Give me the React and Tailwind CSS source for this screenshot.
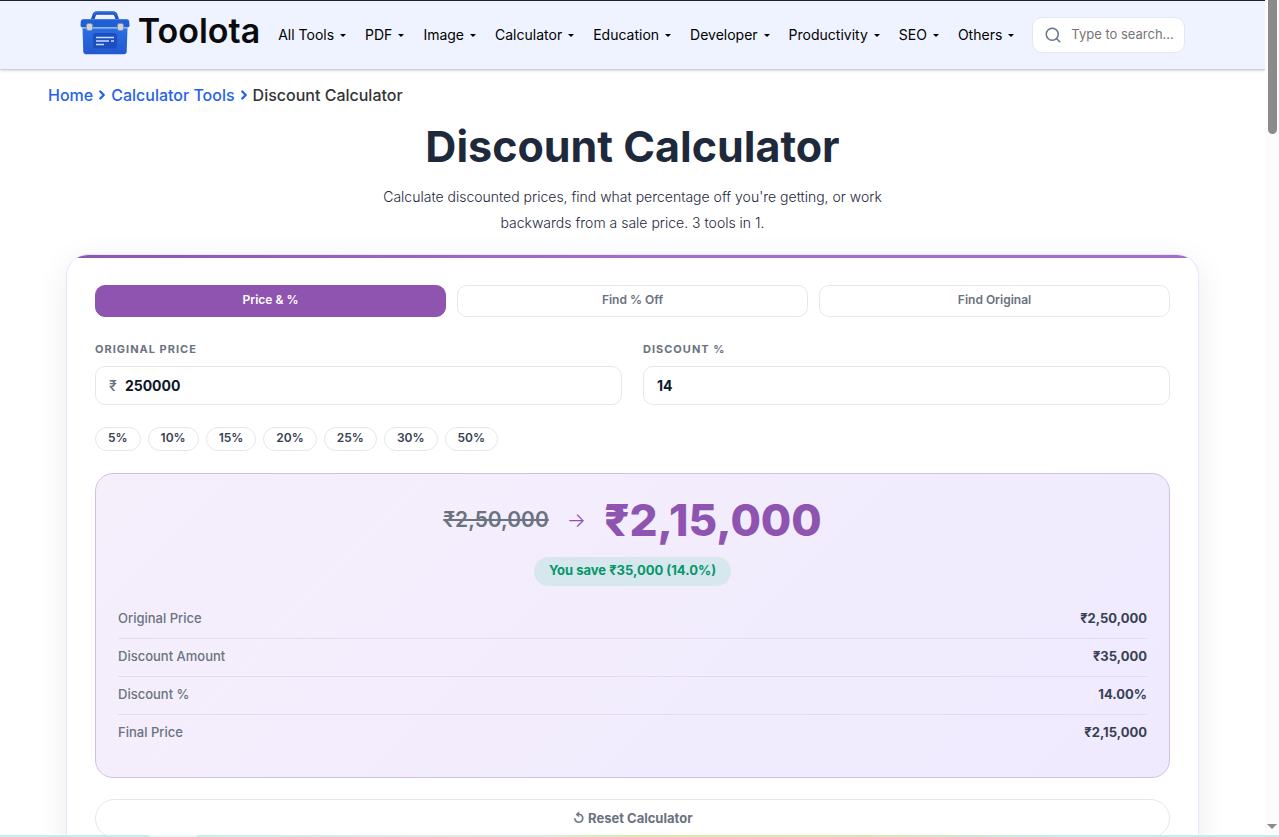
import { useState } from "react";
import { ChevronRight, Search } from "lucide-react";

const MENUS = ["All Tools", "PDF", "Image", "Calculator", "Education", "Developer", "Productivity", "SEO", "Others"];
const MODES = ["Price & %", "Find % Off", "Find Original"];
const PRESETS = [5, 10, 15, 20, 25, 30, 50];

const rupees = (n) => "₹" + Math.round(n).toLocaleString("en-IN");

function LogoMark() {
  return (
    <svg viewBox="0 0 50 44" className="h-11 w-[50px] shrink-0" aria-hidden="true">
      <defs>
        <linearGradient id="case" x1="0" y1="0" x2="0" y2="1">
          <stop offset="0" stopColor="#2b6fe4" />
          <stop offset="1" stopColor="#2258cf" />
        </linearGradient>
      </defs>
      <path d="M12.500 9l1.500-4.500Q14.700 2 17 2h16q2.300 0 3 2.500L37.500 9" fill="none" stroke="#1d55c4" strokeWidth="3.500" strokeLinejoin="round" />
      <path d="M14 4Q14.800 1.200 17 1.200h16q2.200 0 3 2.800" fill="none" stroke="#4a86ea" strokeWidth=".8" />
      <path d="M2.500 17h45l-.8 23.500q-.2 2.700-2.700 2.700H6q-2.500 0-2.700-2.700z" fill="url(#case)" />
      <path d="M.8 10.500Q1 8 3.500 8h43q2.500 0 2.700 2.500l.3 4q0 2-2 2h-45q-2 0-2-2z" fill="#1f5fd6" />
      <path d="M3 8.600h44" stroke="#4a86ea" strokeWidth=".9" />
      <path d="M2 17h46" stroke="#a9c4f5" strokeWidth="1.200" />
      <rect x="6.500" y="12.500" width="6" height="7" rx="1.800" fill="#d0d4da" stroke="#7c8aa3" strokeWidth=".8" />
      <rect x="37.500" y="12.500" width="6" height="7" rx="1.800" fill="#d0d4da" stroke="#7c8aa3" strokeWidth=".8" />
      <rect x="13" y="22" width="24" height="15.500" rx="3" fill="#1b4fc0" />
      <path d="M16 26.500h18M16 30h13M31 30h3M16 33.500h8" stroke="#c9dcff" strokeWidth="1.500" />
    </svg>
  );
}

function Header() {
  return (
    <header className="relative z-10 border-t border-t-[#1e2029] border-b border-b-[#c9ced8] bg-[#eff3ff] shadow-sm">
      <div className="flex h-[68px] items-center justify-center gap-[18px]">
        <a href="#" className="flex items-center gap-2 pb-1" aria-label="Toolota home">
          <LogoMark />
          <span className="pb-1 text-[34px] leading-10 font-semibold text-[#0b0b0d]">Toolota</span>
        </a>
        <nav className="flex items-center gap-[19px]">
          {MENUS.map((m) => (
            <button key={m} type="button" className="flex items-center gap-1.5 text-[14px] leading-5 whitespace-nowrap text-black">
              {m}
              <span className="border-x-[3px] border-t-[3px] border-x-transparent border-t-black" />
            </button>
          ))}
        </nav>
        <label className="flex h-9 w-[153px] items-center gap-[9px] rounded-[10px] border border-[#e2e8f0] bg-white pl-[11px]">
          <Search className="size-[18px] shrink-0 text-[#64748b]" />
          <input
            type="text"
            aria-label="Search tools"
            placeholder="Type to search..."
            className="w-full min-w-0 bg-transparent text-[13px] outline-none placeholder:text-[#757575]"
          />
        </label>
      </div>
    </header>
  );
}

function Breadcrumb() {
  return (
    <nav aria-label="Breadcrumb" className="flex items-center gap-0.5 px-12 pt-[13px] text-[16px] leading-6 font-medium text-[#2563eb]">
      <a href="#">Home</a>
      <ChevronRight className="size-3.5" strokeWidth={4} />
      <a href="#">Calculator Tools</a>
      <ChevronRight className="size-3.5" strokeWidth={4} />
      <span className="text-[#333333]">Discount Calculator</span>
    </nav>
  );
}

function Field({ id, label, prefix, value, onChange }) {
  return (
    <div>
      <label htmlFor={id} className="block text-[11px] leading-4 font-bold tracking-[1px] text-[#6b7280] uppercase">
        {label}
      </label>
      <div className="mt-[9px] flex h-[39px] items-center gap-2 rounded-[10px] border border-[#e5e7eb] bg-white px-[13px]">
        {prefix && <span className="text-[14px] font-semibold text-[#6b7280]">{prefix}</span>}
        <input
          id={id}
          type="text"
          inputMode="decimal"
          value={value}
          onChange={(e) => onChange(e.target.value)}
          className="w-full min-w-0 bg-transparent text-[14px] font-bold text-[#0f172a] outline-none"
        />
      </div>
    </div>
  );
}

function Result({ price, percent }) {
  const saved = (price * percent) / 100;
  const rows = [
    ["Original Price", rupees(price)],
    ["Discount Amount", rupees(saved)],
    ["Discount %", percent.toFixed(2) + "%"],
    ["Final Price", rupees(price - saved)],
  ];
  return (
    <section className="mt-[22px] rounded-[18px] border border-[#d3bfe6] bg-linear-135 from-[#f5effc] to-[#efeafe] px-[22px] pt-[22px] pb-[25px]">
      <div className="flex h-12 items-center justify-center gap-[18px]">
        <span className="text-[21px] font-semibold text-[#6b7280] line-through">{rupees(price)}</span>
        <span className="text-[20px] font-light text-[#8e54af]">→</span>
        <span className="text-[44px] leading-none font-extrabold text-[#8e54af]">{rupees(price - saved)}</span>
      </div>
      <p className="mx-auto mt-[13px] w-fit rounded-full bg-[#d6e7ee] px-[15px] pt-[3px] pb-1.5 text-[13px] leading-5 font-bold text-[#059669]">
        You save {rupees(saved)} ({percent.toFixed(1)}%)
      </p>
      <table className="mt-[14px] w-full text-[13px] leading-5">
        <tbody>
          {rows.map(([k, v]) => (
            <tr key={k} className="h-[38px] border-b border-[#e4daf3] last:border-0">
              <th scope="row" className="pb-0.5 text-left font-medium text-[#6b7280]">{k}</th>
              <td className="pb-0.5 text-right font-bold text-[#374151]">{v}</td>
            </tr>
          ))}
        </tbody>
      </table>
    </section>
  );
}

export default function App() {
  const [mode, setMode] = useState(0);
  const [price, setPrice] = useState("250000");
  const [percent, setPercent] = useState("14");

  const reset = () => {
    setMode(0);
    setPrice("250000");
    setPercent("14");
  };

  return (
    <div className="flex h-screen flex-col overflow-hidden bg-white font-['Inter',sans-serif]">
      <div className="flex min-h-0 flex-1">
        <div className="min-w-0 flex-1 overflow-hidden">
          <Header />
          <Breadcrumb />
          <main className="px-[66px]">
            <h1 className="mt-[11px] text-center text-[43px] leading-[56px] font-bold text-[#1e293b]">Discount Calculator</h1>
            <p className="mx-auto mt-[10px] max-w-[520px] text-center text-[14px] leading-[26px] font-light text-[#1e293b]">
              Calculate discounted prices, find what percentage off you're getting, or work backwards from a sale price. 3 tools in 1.
            </p>
            <div className="mt-[18px] overflow-hidden rounded-[22px] border border-[#e9e5f8] bg-white shadow-[0_8px_32px_rgba(0,0,0,0.08)]">
              <div className="h-[3px] bg-linear-to-r from-[#8e54af] via-[#a66cc8] to-[#a66cc8]" />
              <div className="px-7 pt-[27px] pb-7">
                <div className="grid grid-cols-3 gap-[11px]">
                  {MODES.map((m, i) => (
                    <button
                      key={m}
                      type="button"
                      aria-pressed={mode === i}
                      onClick={() => setMode(i)}
                      className={
                        "h-8 rounded-[10px] border pb-0.5 text-[12px] font-semibold " +
                        (mode === i ? "border-[#8e54af] bg-[#8e54af] text-white" : "border-[#e5e7eb] bg-white text-[#6b7280]")
                      }
                    >
                      {m}
                    </button>
                  ))}
                </div>
                <div className="mt-6 grid grid-cols-2 gap-[21px]">
                  <Field id="price" label="Original Price" prefix="₹" value={price} onChange={setPrice} />
                  <Field id="percent" label="Discount %" value={percent} onChange={setPercent} />
                </div>
                <div className="mt-[22px] flex flex-wrap gap-[7px]">
                  {PRESETS.map((p) => (
                    <button
                      key={p}
                      type="button"
                      onClick={() => setPercent(String(p))}
                      className="h-6 rounded-full border border-[#e5e7eb] bg-white px-3 pb-0.5 text-[12px] font-semibold text-[#374151]"
                    >
                      {p}%
                    </button>
                  ))}
                </div>
                <Result price={Number(price) || 0} percent={Number(percent) || 0} />
                <button
                  type="button"
                  onClick={reset}
                  className="mt-[21px] h-[39px] w-full rounded-full border border-[#e5e7eb] bg-white text-[13px] font-bold text-[#6b7280]"
                >
                  ↺ Reset Calculator
                </button>
              </div>
            </div>
          </main>
        </div>
        <div className="flex w-3.5 flex-col items-center justify-between bg-[#fcfcfc] pb-1.5" aria-hidden="true">
          <div className="h-[134px] w-[9px] rounded-b-full bg-[#8b8b8b]" />
          <div className="border-x-[5px] border-t-[5px] border-x-transparent border-t-[#8b8b8b]" />
        </div>
      </div>
      <div className="flex h-0.5 shrink-0" aria-hidden="true">
        <div className="w-[149px] bg-[#c5efee]" />
        <div className="w-12 bg-[#e6f8f7]" />
        <div className="flex-1 bg-[linear-gradient(90deg,#c6f0e8_0%,#e3ebe6_20%,#dcebdc_32%,#e0e8a8_41%,#dfe3b4_62%,#c5eeee_80%,#c5eff0_100%)]" />
      </div>
    </div>
  );
}
